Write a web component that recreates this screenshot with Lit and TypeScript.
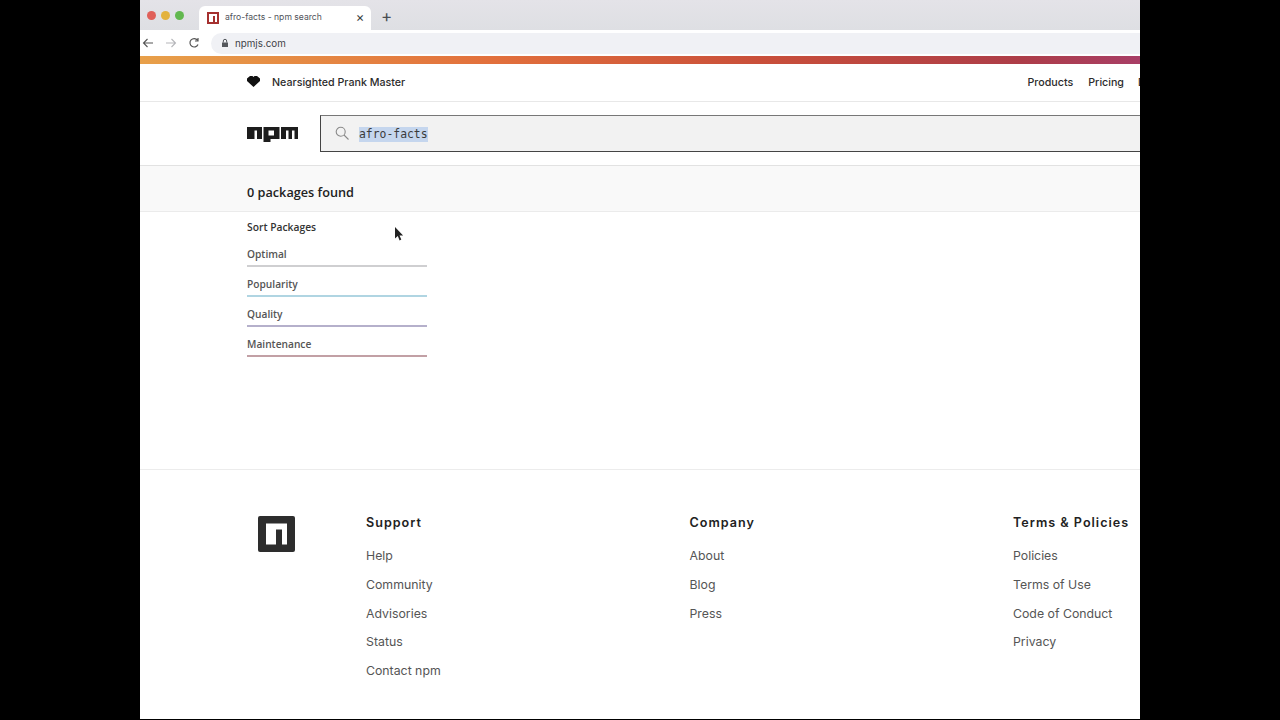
import { LitElement, html, css } from 'lit';
import { customElement } from 'lit/decorators.js';

const footerCols = [
  { title: 'Support', width: 323.5, links: ['Help', 'Community', 'Advisories', 'Status', 'Contact npm'] },
  { title: 'Company', width: 323.5, links: ['About', 'Blog', 'Press'] },
  { title: 'Terms & Policies', width: 127, links: ['Policies', 'Terms of Use', 'Code of Conduct', 'Privacy'] },
];

const sorts = [
  { label: 'Optimal', kind: 'optimal' },
  { label: 'Popularity', kind: 'popularity' },
  { label: 'Quality', kind: 'quality' },
  { label: 'Maintenance', kind: 'maintenance' },
];

@customElement('app-root')
export class AppRoot extends LitElement {
  static styles = css`
    :host {
      display: block;
      width: 1280px;
      height: 720px;
      background: #000;
      overflow: hidden;
    }
    .frame {
      width: 1000px;
      height: 719px;
      margin-left: 140px;
      background: #fff;
      overflow: hidden;
      position: relative;
      font-family: 'Inter', sans-serif;
      color: #222;
    }
    .tabstrip {
      height: 30px;
      background: linear-gradient(#e4e3e8, #dedfe3);
      display: flex;
      align-items: flex-end;
      padding-left: 7px;
    }
    .lights {
      display: flex;
      gap: 5px;
      align-self: flex-start;
      margin-top: 11px;
      width: 52px;
    }
    .lights i {
      width: 9px;
      height: 9px;
      border-radius: 50%;
    }
    .tab {
      width: 172px;
      height: 24px;
      background: #fff;
      border-radius: 6px 6px 0 0;
      display: flex;
      align-items: center;
      padding: 0 0 2px 8px;
      box-sizing: border-box;
      font-size: 8.6px;
      color: #50535a;
    }
    .tab svg { margin-right: 6px; margin-top: 2px; }
    .tab .title { flex: 1; }
    .tab .close { width: 22px; font-size: 13px; color: #3c3f44; text-align: center; }
    .plus { margin-left: 10px; padding-bottom: 2px; font-size: 17px; line-height: 24px; color: #4a4d52; }
    .urlbar {
      height: 26px;
      background: #fff;
      display: flex;
      align-items: center;
      box-sizing: border-box;
      padding-left: 2px;
    }
    .urlbar .nav { display: flex; gap: 7px; width: 69px; align-items: center; }
    .omni {
      flex: 1;
      height: 21px;
      background: #f0f1f5;
      border-radius: 11px 0 0 11px;
      display: flex;
      align-items: center;
      padding-left: 10px;
      gap: 6px;
      font-size: 9.8px;
      color: #3e4146;
    }
    .gradient {
      height: 8px;
      background: linear-gradient(90deg, #e8a04a 0%, #e2703c 35%, #c94f3a 62%, #ad3d48 88%, #a83e66 100%);
    }
    .topnav {
      height: 37px;
      display: flex;
      align-items: center;
      padding-left: 107px;
      border-bottom: 1px solid #e8e8e8;
      font-size: 10.7px;
      font-weight: 500;
      color: #2c2c2c;
      white-space: nowrap;
    }
    .topnav svg { margin: -2px 12px 0 0; }
    .topnav .spacer { flex: 1; }
    .topnav .link { margin-left: 15px; }
    .topnav .cut { margin-left: 14px; width: 2px; overflow: hidden; flex: none; }
    .searchrow {
      height: 64px;
      display: flex;
      align-items: center;
      padding-left: 107px;
      box-sizing: border-box;
      border-bottom: 1px solid #e2e2e2;
    }
    .npm { margin: 1px 22px 0 0; flex: none; }
    .search {
      flex: 1;
      height: 37px;
      background: #f2f2f2;
      border: 1px solid #444;
      border-top-color: #777;
      border-right: none;
      box-sizing: border-box;
      display: flex;
      align-items: center;
      padding: 1px 0 0 14px;
    }
    .search svg { margin: -3px 10px 0 0; }
    .search .q {
      font-family: 'DejaVu Sans Mono', monospace;
      font-size: 11.4px;
      color: #3b3b3b;
      background: #c5d6ee;
      line-height: 15px;
    }
    .results {
      height: 38px;
      background: #f9f9f9;
      border-bottom: 1px solid #ebebeb;
      display: flex;
      align-items: center;
      padding: 7px 0 0 107px;
      font-family: 'Open Sans', sans-serif;
      font-size: 12.7px;
      font-weight: 600;
      color: #222;
    }
    .sort {
      padding: 6px 0 0 107px;
      height: 258px;
      box-sizing: border-box;
      border-bottom: 1px solid #ececec;
      font-family: 'Open Sans', sans-serif;
      font-size: 10.2px;
      font-weight: 600;
      position: relative;
    }
    .sort h2 { margin: 0; font: inherit; font-size: 10.3px; line-height: 19px; color: #333; }
    .sort .item {
      width: 180px;
      height: 30px;
      box-sizing: border-box;
      display: flex;
      align-items: center;
      padding-top: 6px;
      color: #555;
      border-bottom: 2px solid transparent;
    }
    .sort .optimal { border-bottom-color: #cfcfd1; }
    .sort .popularity { border-bottom-color: #b0d5e2; }
    .sort .quality { border-bottom-color: #b5b0cb; }
    .sort .maintenance { border-bottom-color: #c2a0a5; }
    .cursor { position: absolute; left: 254px; top: 15px; }
    footer {
      display: flex;
      padding: 44px 0 0 118px;
    }
    .logo { width: 108px; flex: none; padding-top: 2px; }
    .col { flex: none; font-size: 12.3px; color: #555; white-space: nowrap; }
    .col h3 {
      margin: 0 0 10px;
      font-size: 12.6px;
      font-weight: 600;
      letter-spacing: 1px;
      line-height: 18px;
      color: #222;
    }
    .col a { display: block; height: 28.8px; line-height: 28.8px; }
  `;

  render() {
    return html`
      <div class="frame">
        <div class="tabstrip">
          <div class="lights">
            <i style="background:#e0605a"></i><i style="background:#e3b23e"></i><i style="background:#62b84f"></i>
          </div>
          <div class="tab">
            <svg width="12" height="12" viewBox="0 0 12 12">
              <rect width="12" height="12" fill="#a5302f"/>
              <path d="M2 2h8v8H8V4H6v6H2z" fill="#fff"/>
            </svg>
            <span class="title">afro-facts - npm search</span>
            <span class="close">×</span>
          </div>
          <span class="plus">+</span>
        </div>
        <div class="urlbar">
          <div class="nav">
            <svg width="12" height="12" viewBox="0 0 12 12" fill="none" stroke="#555" stroke-width="1.100"><path d="M11 6H1.500M5.500 2 1.500 6l4 4"/></svg>
            <svg style="margin-left:4px" width="12" height="12" viewBox="0 0 12 12" fill="none" stroke="#b5b6ba" stroke-width="1.100"><path d="M1 6h9.500M6.500 2l4 4-4 4"/></svg>
            <svg style="margin-left:4px" width="12" height="12" viewBox="0 0 12 12" fill="none" stroke="#555" stroke-width="1.200"><path d="M10 7.500A4.200 4.200 0 1 1 9.500 3.200M10 1v3H7"/></svg>
          </div>
          <div class="omni">
            <svg width="8" height="10" viewBox="0 0 8 10"><path d="M1 4.500h6V9H1z" fill="#55585d"/><path d="M2.300 4.500V3a1.700 1.700 0 0 1 3.400 0v1.500" fill="none" stroke="#55585d"/></svg>
            <span>npmjs.com</span>
          </div>
        </div>
        <div class="gradient"></div>
        <div class="topnav">
          <svg width="13" height="11" viewBox="0 0 13 11"><path d="M3 0h2.500l1 1 1-1H10l3 2.500V5l-6.500 6L0 5V2.500z" fill="#111"/></svg>
          <span>Nearsighted Prank Master</span>
          <span class="spacer"></span>
          <span class="link">Products</span>
          <span class="link">Pricing</span>
          <span class="cut">Documentation</span>
        </div>
        <div class="searchrow">
          <svg class="npm" width="51" height="15" viewBox="0 0 51 15">
            <path d="M0 0h15v12h-5V3.500H7.500V12H0z" fill="#1d1d1d"/>
            <path fill-rule="evenodd" d="M16.500 0h16v12h-9v3h-7zM21.500 3.500v5h5.500v-5z" fill="#1d1d1d"/>
            <path d="M34 0h17v12h-3.500V3.500H45V12h-3.500V3.500H39V12h-5z" fill="#1d1d1d"/>
          </svg>
          <div class="search">
            <svg width="14" height="14" viewBox="0 0 14 14" fill="none" stroke="#8a8a8a" stroke-width="1.100"><circle cx="5.700" cy="5.700" r="4.500"/><path d="m9 9 4.500 4.500"/></svg>
            <span class="q">afro-facts</span>
          </div>
        </div>
        <div class="results">0 packages found</div>
        <div class="sort">
          <h2>Sort Packages</h2>
          ${sorts.map(s => html`<div class="item ${s.kind}">${s.label}</div>`)}
          <svg class="cursor" width="10" height="15" viewBox="0 0 10 15"><path d="M1 0v11.500l2.800-2.400 1.800 4.300 1.700-.8-1.800-4.100h3.600z" fill="#222"/></svg>
        </div>
        <footer>
          <div class="logo">
            <svg width="37" height="36" viewBox="0 0 37 36">
              <rect width="37" height="36" rx="2" fill="#2d2d2d"/>
              <path d="M8 7.500h21v21h-5v-15h-6v15H8z" fill="#fff"/>
            </svg>
          </div>
          ${footerCols.map(c => html`
            <div class="col" style="width:${c.width}px">
              <h3>${c.title}</h3>
              ${c.links.map(l => html`<a>${l}</a>`)}
            </div>`)}
        </footer>
      </div>
    `;
  }
}
